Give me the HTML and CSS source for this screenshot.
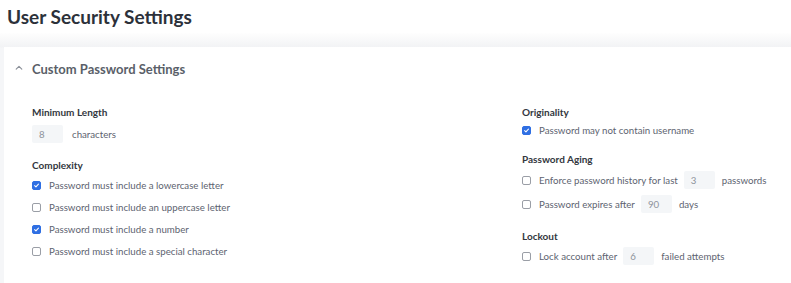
FILE: index.html
```html
<!DOCTYPE html>
<html lang="en">
<head>
    <meta charset="UTF-8">
    <meta name="viewport" content="width=device-width, initial-scale=1.0">
    <title>User Security Settings</title>
    <link rel="stylesheet" href="styles.css">
</head>
<body>

<div class="page-header">
    <h1>User Security Settings</h1>
</div>

<div class="page-body">
    <div class="panel">
        <div class="panel-header">
            <svg class="chevron" viewBox="0 0 10 6" fill="none" xmlns="http://www.w3.org/2000/svg">
                <path d="M1.5 5L5 1.5 8.5 5" stroke="currentColor" stroke-width="1.4" stroke-linecap="round" stroke-linejoin="round"/>
            </svg>
            <span>Custom Password Settings</span>
        </div>

        <div class="panel-content">
            <div class="settings-col">
                <div class="group-title">Minimum Length</div>
                <div class="setting-row">
                    <span class="num-input">8</span>
                    <span>characters</span>
                </div>

                <div class="group-title complexity">Complexity</div>
                <label class="setting-row check"><span class="box checked"></span>Password must include a lowercase letter</label>
                <label class="setting-row check"><span class="box"></span>Password must include an uppercase letter</label>
                <label class="setting-row check"><span class="box checked"></span>Password must include a number</label>
                <label class="setting-row check"><span class="box"></span>Password must include a special character</label>
            </div>

            <div class="settings-col right">
                <div class="group-title">Originality</div>
                <label class="setting-row check"><span class="box checked"></span>Password may not contain username</label>

                <div class="group-title aging">Password Aging</div>
                <div class="setting-row check tall">
                    <span class="box"></span>Enforce password history for last
                    <span class="num-input">3</span>
                    <span>passwords</span>
                </div>
                <div class="setting-row check tall">
                    <span class="box"></span>Password expires after
                    <span class="num-input">90</span>
                    <span>days</span>
                </div>

                <div class="group-title lockout">Lockout</div>
                <div class="setting-row check">
                    <span class="box"></span>Lock account after
                    <span class="num-input">6</span>
                    <span>failed attempts</span>
                </div>
            </div>
        </div>
    </div>
</div>

</body>
</html>
```

FILE: styles.css
```css
* {
    box-sizing: border-box;
}

body {
    margin: 0;
    font-family: "Lato", "Noto Sans", sans-serif;
    background-color: #fff;
    color: #5d6370;
}

.page-header {
    height: 33px;
    padding-left: 7px;
    display: flex;
    align-items: center;
}

.page-header h1 {
    margin: 0;
    font-size: 19px;
    font-weight: 700;
    color: #2c313a;
}

.page-body {
    padding-top: 14px;
    padding-left: 4px;
    background: linear-gradient(to bottom, #fefefe 0px, #f2f3f5 14px, #f5f6f8 15px);
}

.panel {
    background-color: #fff;
    height: 236px;
}

.panel-header {
    height: 44px;
    padding-left: 11px;
    display: flex;
    align-items: center;
    font-size: 13px;
    font-weight: 700;
    color: #5a5f69;
}

.chevron {
    width: 8px;
    height: 5px;
    margin-right: 9px;
    margin-top: -3px;
    color: #8a8f98;
}

.panel-content {
    display: flex;
    padding-left: 28px;
    padding-top: 14px;
}

.settings-col {
    flex: 0 0 490px;
    display: flex;
    flex-direction: column;
}

.settings-col.right {
    flex: 1 1 auto;
}

.group-title {
    height: 14px;
    line-height: 14px;
    font-size: 10px;
    font-weight: 700;
    color: #33373e;
}

.group-title.complexity {
    margin-top: 13px;
    margin-bottom: 2px;
}

.group-title.aging {
    margin-top: 11px;
    margin-bottom: 2px;
}

.group-title.lockout {
    margin-top: 13px;
    margin-bottom: 2px;
}

.setting-row {
    display: flex;
    align-items: center;
    height: 22px;
    font-size: 9.7px;
    color: #5d6370;
}

.setting-row.tall {
    height: 24px;
}

.group-title + .setting-row:not(.check) {
    margin-top: 4px;
}

.num-input {
    display: inline-flex;
    align-items: center;
    width: 31px;
    height: 18px;
    padding-left: 7px;
    margin: 0 7px 0 6px;
    background-color: #f4f6f8;
    color: #8e939b;
    border-radius: 2px;
}

.settings-col > .setting-row > .num-input:first-child {
    margin-left: 0;
    margin-right: 9px;
}

.box {
    width: 9px;
    height: 9px;
    margin-right: 8px;
    border: 1px solid #9a9ea6;
    border-radius: 2px;
    background-color: #fff;
    flex-shrink: 0;
}

.box.checked {
    border-color: #2f6fe3;
    background-color: #2f6fe3;
    background-image: url("data:image/svg+xml;utf8,<svg xmlns='http://www.w3.org/2000/svg' viewBox='0 0 10 10'><path d='M2.3 5.2l1.9 1.9 3.6-4' fill='none' stroke='white' stroke-width='1.5' stroke-linecap='round' stroke-linejoin='round'/></svg>");
    background-size: 100% 100%;
}
```
